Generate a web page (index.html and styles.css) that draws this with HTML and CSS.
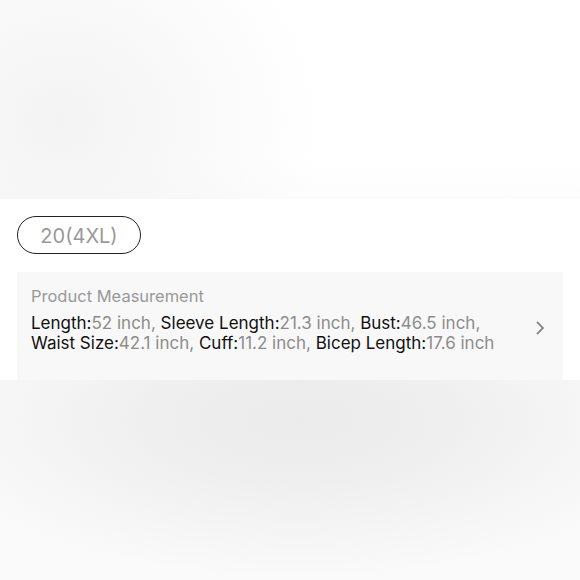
FILE: index.html
```html
<!DOCTYPE html>
<html lang="en">
<head>
    <meta charset="UTF-8">
    <meta name="viewport" content="width=device-width, initial-scale=1.0">
    <title>Product Measurement</title>
    <link rel="stylesheet" href="styles.css">
</head>
<body>
    <!-- Fondo superior (imagen borrosa) -->
    <div class="top-blur"></div>

    <!-- Talla y medidas -->
    <div class="size-section">
        <div class="size-pill">20(4XL)</div>

        <div class="measure-box">
            <div class="measure-text">
                <div class="measure-title">Product Measurement</div>
                <div class="measure-values">
                    <b>Length:</b><span>52 inch, </span><b>Sleeve Length:</b><span>21.3 inch, </span><b>Bust:</b><span>46.5 inch,</span><br>
                    <b>Waist Size:</b><span>42.1 inch, </span><b>Cuff:</b><span>11.2 inch, </span><b>Bicep Length:</b><span>17.6 inch</span>
                </div>
            </div>
            <svg class="chevron" width="10" height="16" viewBox="0 0 10 16">
                <path d="M2 2 L8 8 L2 14" fill="none" stroke="#888" stroke-width="1.8"/>
            </svg>
        </div>
    </div>

    <!-- Fondo inferior -->
    <div class="bottom-blur"></div>
</body>
</html>
```

FILE: styles.css
```css
body {
    margin: 0;
    font-family: Inter, "Liberation Sans", Arial, sans-serif;
    background: #fafafa;
}

/* Fondo superior */
.top-blur {
    height: 199px;
    background:
        radial-gradient(ellipse 260px 230px at 60px 120px, #f3f3f3 0%, rgba(255, 255, 255, 0) 100%),
        linear-gradient(180deg, #ffffff 80%, #fcfcfc 100%);
}

/* Sección de talla */
.size-section {
    background: #ffffff;
    padding: 17px 17px 0 17px;
}

.size-pill {
    display: inline-flex;
    align-items: center;
    justify-content: center;
    box-sizing: border-box;
    width: 124px;
    height: 38px;
    padding-top: 1px;
    border: 1.5px solid #222;
    border-radius: 19px;
    color: #999;
    font-size: 20px;
}

.measure-box {
    margin-top: 18px;
    height: 108px;
    box-sizing: border-box;
    background: #f8f8f8;
    display: flex;
    align-items: flex-start;
    padding: 14px 18px 0 14px;
}

.measure-text {
    flex: 1;
}

.measure-title {
    color: #999;
    font-size: 16.5px;
    line-height: 20px;
    margin-bottom: 7px;
}

.measure-values {
    font-size: 17px;
    line-height: 20px;
}

.measure-values b {
    font-weight: normal;
    color: #111;
}

.measure-values span {
    color: #8c8c8c;
}

.chevron {
    margin-top: 34px;
}

/* Fondo inferior */
.bottom-blur {
    height: 200px;
    background:
        radial-gradient(ellipse 380px 160px at 300px 40px, #ebebeb 0%, #efefef 40%, rgba(250, 250, 250, 0) 100%),
        #fafafa;
}
```
